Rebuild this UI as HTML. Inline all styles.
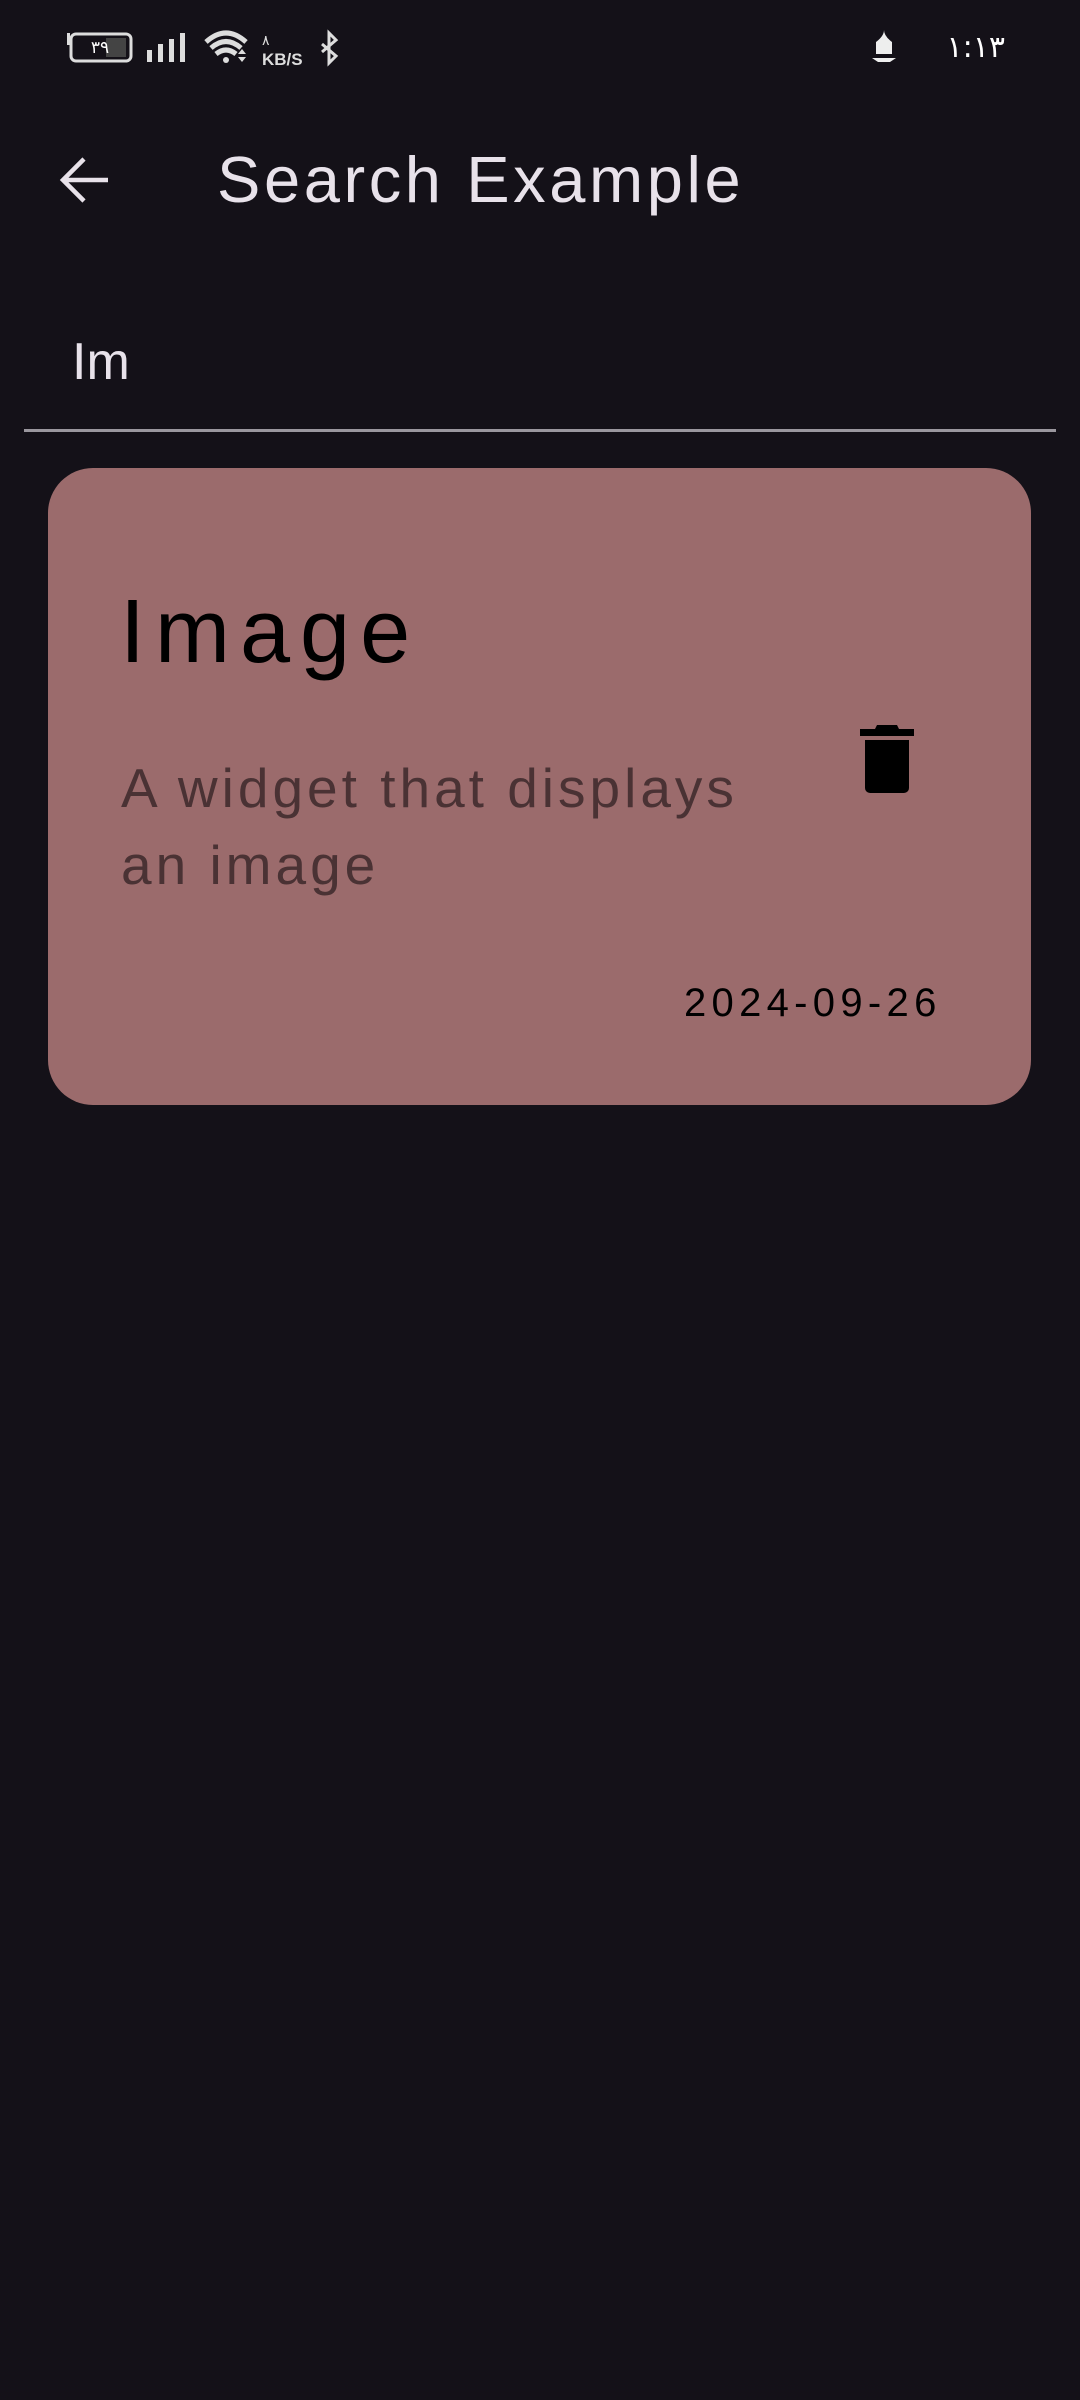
<!DOCTYPE html>
<html><head><meta charset="utf-8"><style>
html,body{margin:0;padding:0;width:1080px;height:2400px;background:#141118;overflow:hidden;font-family:"Liberation Sans",sans-serif;}
.abs{position:absolute;white-space:nowrap;}
</style></head><body>
<svg class="abs" style="left:0;top:0" width="1080" height="80" viewBox="0 0 1080 80">
  <rect x="67" y="33" width="3" height="12" fill="#ddd"/>
  <rect x="71" y="34" width="60" height="27" rx="5" fill="none" stroke="#ddd" stroke-width="3"/>
  <rect x="106" y="38" width="20" height="19" fill="#444"/>
  <text x="100" y="53" font-size="17" fill="#fff" font-family="DejaVu Sans" text-anchor="middle">٣٩</text>
  <rect x="147" y="50" width="5" height="12" fill="#ddd"/>
  <rect x="158" y="44" width="5" height="18" fill="#ddd"/>
  <rect x="169" y="39" width="5" height="23" fill="#ddd"/>
  <rect x="180" y="33" width="5" height="29" fill="#ddd"/>
  <path d="M206 42 Q226 24 246 42 M211 48 Q226 35 241 48 M216 54 Q226 46 236 54" stroke="#ddd" stroke-width="5" fill="none"/>
  <circle cx="226" cy="60" r="3" fill="#ddd"/>
  <path d="M238 54 l4 -5 l4 5z M238 57 l4 5 l4 -5z" fill="#ddd"/>
  <text x="262" y="45" font-size="14" fill="#ddd" font-family="DejaVu Sans">٨</text>
  <text x="262" y="65" font-size="17" fill="#ddd" font-family="Liberation Sans" font-weight="bold">KB/S</text>
  <path d="M322 44 L336 56 L329 63 L329 33 L336 40 L322 52" stroke="#ddd" stroke-width="3" fill="none"/>
  <path d="M876 42 q8 -6 8 -12 q0 6 8 12 v12 h-16z M872 58 h24 l-6 4 h-12z" fill="#eee"/>
  <text x="1005" y="57" font-size="30" fill="#fff" font-family="DejaVu Sans" text-anchor="end">١:١٣</text>
</svg>
<svg class="abs" style="top:155px;left:58px" width="52" height="50" viewBox="0 0 52 50">
  <path d="M50 25 H6 M26 4 L5 25 L26 46" stroke="#e8e2ea" stroke-width="4.5" fill="none"/>
</svg>
<div class="abs" style="left:217px;top:142px;font-size:65px;line-height:75px;color:#e8e2ea;letter-spacing:3.6px;">Search Example</div>
<div class="abs" style="left:72px;top:333px;font-size:52px;line-height:58px;color:#e8e2ea;">Im</div>
<div class="abs" style="left:24px;top:429px;width:1032px;height:3px;background:#9a979e;"></div>
<div class="abs" style="left:48px;top:468px;width:983px;height:637px;background:#9b6b6c;border-radius:45px;"></div>
<div class="abs" style="left:120px;top:582px;font-size:90px;line-height:100px;color:#000;letter-spacing:10px;">Image</div>
<div class="abs" style="left:121px;top:750px;font-size:55px;line-height:77px;color:#4a3234;letter-spacing:4px;white-space:normal;width:760px;">A widget that displays<br>an image</div>
<div class="abs" style="left:684px;top:979px;font-size:40px;line-height:48px;color:#000;letter-spacing:5.3px;">2024-09-26</div>
<svg class="abs" style="left:858px;top:722px" width="58" height="72" viewBox="0 0 58 72">
  <path d="M19 3 h20 l2 4 h15 v7 h-54 v-7 h15z" fill="#000"/>
  <path d="M7 18 h44 v48 a5 5 0 0 1 -5 5 h-34 a5 5 0 0 1 -5 -5z" fill="#000"/>
</svg>
</body></html>
